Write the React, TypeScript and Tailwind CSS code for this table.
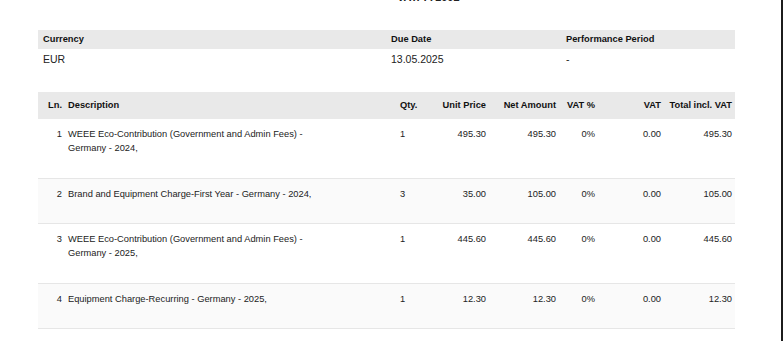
import React from "react";

const items = [
  { ln: "1", desc: "WEEE Eco-Contribution (Government and Admin Fees) - Germany - 2024,", qty: "1", unit: "495.30", net: "495.30", vatp: "0%", vat: "0.00", total: "495.30", bg: "bg-white" },
  { ln: "2", desc: "Brand and Equipment Charge-First Year - Germany - 2024,", qty: "3", unit: "35.00", net: "105.00", vatp: "0%", vat: "0.00", total: "105.00", bg: "bg-[#fafafa]" },
  { ln: "3", desc: "WEEE Eco-Contribution (Government and Admin Fees) - Germany - 2025,", qty: "1", unit: "445.60", net: "445.60", vatp: "0%", vat: "0.00", total: "445.60", bg: "bg-white" },
  { ln: "4", desc: "Equipment Charge-Recurring - Germany - 2025,", qty: "1", unit: "12.30", net: "12.30", vatp: "0%", vat: "0.00", total: "12.30", bg: "bg-[#fafafa]" },
];

const cols = "grid grid-cols-[26px_331px_45px_50px_70px_39px_66px_70px]";

export default function App() {
  return (
    <div
      className="w-[784px] h-[341px] overflow-hidden bg-white"
      style={{ fontFamily: '"Liberation Sans", Arial, sans-serif' }}
    >
      <div className="w-[783px] h-[341px] border-r-2 border-[#1c1c1c] overflow-hidden">
        <div className="h-[3px] overflow-hidden">
          <div className="-mt-[9px] ml-[397px] text-[11px] font-bold leading-[12px] text-[#222]">VAT: 771002</div>
        </div>
        <div className="ml-[38px] mt-[27px] w-[697px] text-[9.3px] text-[#222]">
          <div className="grid grid-cols-[348px_175px_174px] h-[19px] items-center bg-[#e9e9e9] font-bold text-[#111]">
            <div className="pl-[5px]">Currency</div>
            <div className="pl-[5px]">Due Date</div>
            <div className="pl-[5px]">Performance Period</div>
          </div>
          <div className="grid grid-cols-[348px_175px_174px] h-[21px] items-center text-[10.5px]">
            <div className="pl-[5px]">EUR</div>
            <div className="pl-[5px]">13.05.2025</div>
            <div className="pl-[5px]">-</div>
          </div>

          <div className={`${cols} mt-[22px] h-[27px] items-center bg-[#e9e9e9] font-bold text-[#111]`}>
            <div className="text-right pr-[2px]">Ln.</div>
            <div className="pl-[4px]">Description</div>
            <div className="pl-[5px]">Qty.</div>
            <div className="text-right pr-[4px]">Unit Price</div>
            <div className="text-right pr-[4px]">Net Amount</div>
            <div className="text-right pr-[4px]">VAT %</div>
            <div className="text-right pr-[4px]">VAT</div>
            <div className="text-right pr-[3px]">Total incl. VAT</div>
          </div>
          {items.map((it) => (
            <div
              key={it.ln}
              className={`${cols} ${it.bg} pt-[8px] pb-[22.5px] leading-[14px] border-b border-[#e6e6e6]`}
            >
              <div className="text-right pr-[2px]">{it.ln}</div>
              <div className="pl-[4px]">
                <div className="max-w-[262px]">{it.desc}</div>
              </div>
              <div className="pl-[5px]">{it.qty}</div>
              <div className="text-right pr-[4px]">{it.unit}</div>
              <div className="text-right pr-[4px]">{it.net}</div>
              <div className="text-right pr-[4px]">{it.vatp}</div>
              <div className="text-right pr-[4px]">{it.vat}</div>
              <div className="text-right pr-[3px]">{it.total}</div>
            </div>
          ))}
        </div>
      </div>
    </div>
  );
}
